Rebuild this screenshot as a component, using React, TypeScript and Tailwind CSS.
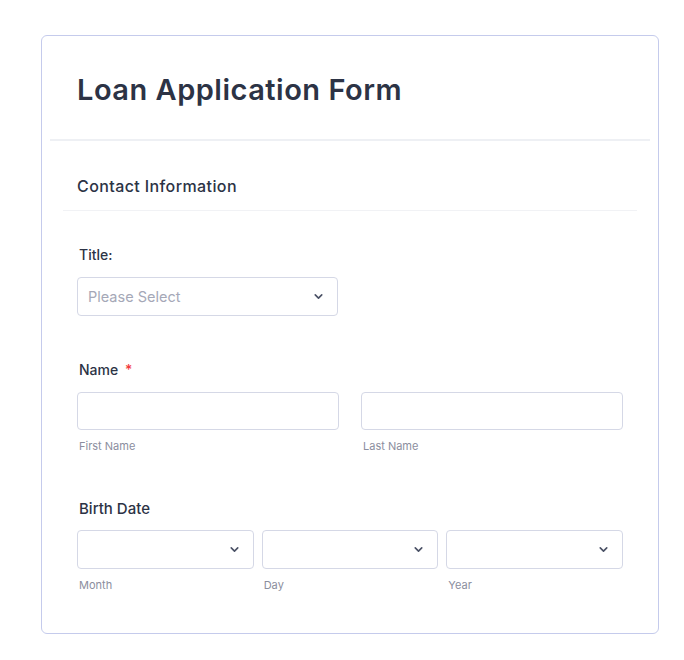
import { ChevronDown } from "lucide-react";

function SelectBox({ placeholder, className }: { placeholder?: string; className?: string }) {
  return (
    <div
      className={`h-[39px] flex items-center justify-between pl-[10px] pr-[12px] border border-[#d5d8e6] rounded-[4px] bg-white ${className ?? ""}`}
    >
      <span className="text-[14.5px] text-[#a5a8b7]">{placeholder}</span>
      <ChevronDown className="w-[13px] h-[13px] text-[#4b5266]" strokeWidth={3} />
    </div>
  );
}

function TextBox() {
  return <div className="h-[38px] w-full border border-[#d5d8e6] rounded-[4px] bg-white" />;
}

function SubLabel({ children }: { children: React.ReactNode }) {
  return <div className="mt-[9px] pl-[2px] text-[11px] leading-[14px] text-[#8b8e9e]">{children}</div>;
}

export default function App() {
  return (
    <div className="min-h-[660px] bg-white pt-[35px] pl-[41px] font-['Inter',sans-serif]">
      <div className="w-[618px] h-[599px] border-[1.5px] border-[#c5cbec] rounded-[6px] bg-white">
        {/* Header */}
        <div className="pt-[37px] pb-[32px] pl-[35px]">
          <h1 className="text-[29px] leading-[34px] font-semibold text-[#2c3345] tracking-[0.5px]">
            Loan Application Form
          </h1>
        </div>
        <div className="mx-[8px] h-[2px] bg-[#eef0f4]" />

        {/* Section heading */}
        <div className="pt-[35px] pb-[14px] pl-[35px]">
          <h2 className="text-[16px] leading-[20px] font-medium text-[#2c3345] tracking-[0.4px]">
            Contact Information
          </h2>
        </div>
        <div className="mx-[21px] h-[1px] bg-[#f1f2f5]" />

        <div className="px-[35px] pt-[34px]">
          {/* Title */}
          <label className="block pl-[2px] text-[14px] leading-[20px] font-medium text-[#2c3345]">Title:</label>
          <SelectBox placeholder="Please Select" className="mt-[12px] w-[261px]" />

          {/* Name */}
          <div className="mt-[44px] pl-[2px] text-[14px] leading-[20px] font-medium text-[#2c3345]">
            Name <span className="ml-[3px] text-[#f23a3c]">*</span>
          </div>
          <div className="mt-[12px] flex gap-[22px]">
            <div className="flex-1 flex flex-col">
              <TextBox />
              <SubLabel>First Name</SubLabel>
            </div>
            <div className="flex-1 flex flex-col">
              <TextBox />
              <SubLabel>Last Name</SubLabel>
            </div>
          </div>

          {/* Birth date */}
          <div className="mt-[46px] pl-[2px] text-[15px] leading-[20px] font-medium text-[#2c3345]">Birth Date</div>
          <div className="mt-[11px] flex gap-[8px]">
            {["Month", "Day", "Year"].map((s) => (
              <div key={s} className="flex-1 flex flex-col">
                <SelectBox />
                <SubLabel>{s}</SubLabel>
              </div>
            ))}
          </div>
        </div>
      </div>
    </div>
  );
}
